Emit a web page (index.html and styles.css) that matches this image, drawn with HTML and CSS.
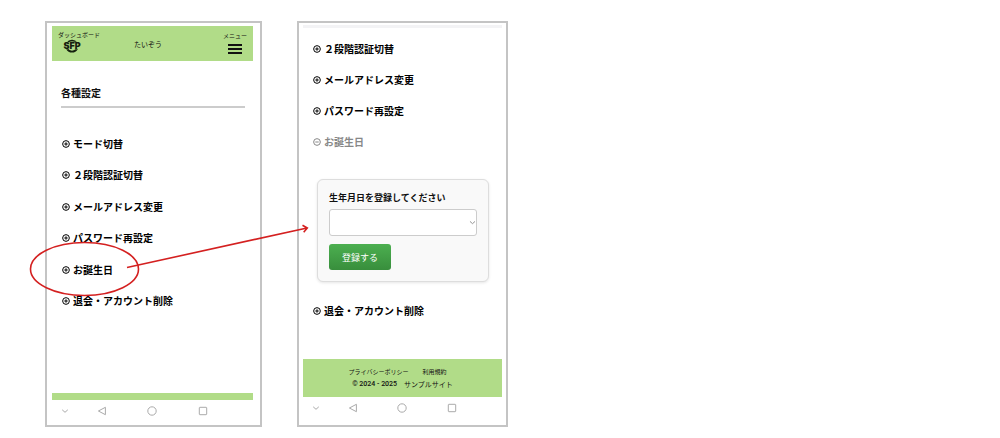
FILE: index.html
```html
<!DOCTYPE html>
<html lang="ja">
<head>
    <meta charset="UTF-8">
    <meta name="viewport" content="width=device-width,initial-scale=1">
    <title>各種設定</title>
    <link rel="stylesheet" href="styles.css">
</head>
<body>
    <!-- 共通アイコン -->
    <svg class="sprite" aria-hidden="true">
        <symbol id="plus" viewBox="0 0 16 16"><circle cx="8" cy="8" r="6.7"/><path d="M8 4.6v6.8M4.6 8h6.8"/></symbol>
        <symbol id="minus" viewBox="0 0 16 16"><circle cx="8" cy="8" r="6.7"/><path d="M4.6 8h6.8"/></symbol>
        <symbol id="down" viewBox="0 0 10 10"><path d="M2.2 3.8L5 6.3l2.8-2.5"/></symbol>
        <symbol id="back" viewBox="0 0 10 10"><path d="M8.4 1.3v7.4L1.4 5z"/></symbol>
        <symbol id="home" viewBox="0 0 10 10"><circle cx="5" cy="5" r="4.2"/></symbol>
        <symbol id="recent" viewBox="0 0 10 10"><rect x="1.3" y="1.3" width="7.4" height="7.4" rx=".6"/></symbol>
    </svg>

    <main class="stage">
        <section class="phone phone-top">
            <header class="header">
                <a class="dash" href="#">
                    <span>ダッシュボード</span>
                    <svg class="logo" viewBox="0 0 36 28" role="img" aria-label="SFP">
                        <path d="M27.5 8A11.5 11.5 0 0 0 8.5 8.5M8 19.5a11.5 11.5 0 0 0 20 0" fill="none" stroke="#15200f" stroke-width="3.6"/>
                        <text x="18" y="20" text-anchor="middle">SFP</text>
                    </svg>
                </a>
                <span class="user">たいぞう</span>
                <button class="burger" type="button">
                    <span>メニュー</span>
                    <i></i><i></i><i></i>
                </button>
            </header>
            <div class="content">
                <h1 class="title">各種設定</h1>
                <ul class="menu menu-full">
                    <li><a href="#"><svg><use href="#plus"/></svg>モード切替</a></li>
                    <li><a href="#"><svg><use href="#plus"/></svg>２段階認証切替</a></li>
                    <li><a href="#"><svg><use href="#plus"/></svg>メールアドレス変更</a></li>
                    <li><a href="#"><svg><use href="#plus"/></svg>パスワード再設定</a></li>
                    <li><a href="#"><svg><use href="#plus"/></svg>お誕生日</a></li>
                    <li><a href="#"><svg><use href="#plus"/></svg>退会・アカウント削除</a></li>
                </ul>
            </div>
            <div class="bar"></div>
            <nav class="keys">
                <svg><use href="#down"/></svg>
                <svg><use href="#back"/></svg>
                <svg><use href="#home"/></svg>
                <svg><use href="#recent"/></svg>
            </nav>
            <!-- 赤丸と矢印 -->
            <svg class="mark" viewBox="0 0 290 80">
                <ellipse cx="57.5" cy="46" rx="54" ry="26.5"/>
                <path d="M100 44.5L280 5M275.5 2.2l4.8 2.8-3.6 4.2"/>
            </svg>
        </section>

        <section class="phone phone-end">
            <div class="edge"></div>
            <div class="content">
                <ul class="menu">
                    <li><a href="#"><svg><use href="#plus"/></svg>２段階認証切替</a></li>
                    <li><a href="#"><svg><use href="#plus"/></svg>メールアドレス変更</a></li>
                    <li><a href="#"><svg><use href="#plus"/></svg>パスワード再設定</a></li>
                    <li><a class="open" href="#"><svg><use href="#minus"/></svg>お誕生日</a></li>
                </ul>
                <form class="card">
                    <label for="birth">生年月日を登録してください</label>
                    <div class="pick">
                        <select id="birth"><option></option></select>
                        <svg><use href="#down"/></svg>
                    </div>
                    <button class="submit" type="button">登録する</button>
                </form>
                <ul class="menu">
                    <li><a href="#"><svg><use href="#plus"/></svg>退会・アカウント削除</a></li>
                </ul>
            </div>
            <footer class="footer">
                <p class="links"><a href="#">プライバシーポリシー</a><a href="#">利用規約</a></p>
                <p class="copy"><span>© 2024 - 2025</span><a href="#">サンプルサイト</a></p>
            </footer>
            <nav class="keys">
                <svg><use href="#down"/></svg>
                <svg><use href="#back"/></svg>
                <svg><use href="#home"/></svg>
                <svg><use href="#recent"/></svg>
            </nav>
        </section>
    </main>
</body>
</html>
```
FILE: styles.css
```css
*{
    box-sizing:border-box;
}
body{
    margin:0;
    background:#fff;
    color:#111;
    font-family:"Noto Sans CJK JP",sans-serif;
    font-size:10px;
    line-height:18px;
}
ul,h1,p{
    margin:0;
    padding:0;
    list-style:none;
}
a{
    color:inherit;
    text-decoration:none;
}
svg{
    display:block;
    fill:none;
    stroke:currentColor;
}
.sprite{
    position:absolute;
    width:0;
    height:0;
}
.stage{
    display:grid;
    grid-template-columns:217fr 211fr 457fr;
    gap:35px;
    padding:21px 0 11px 45px;
}
.phone{
    position:relative;
    display:flex;
    flex-direction:column;
    min-height:406px;
    border:2px solid #c4c4c4;
}
.phone-top{
    padding:3px 7px 0 5px;
}
.phone-end{
    padding:2px 4px 0;
}
.content{
    flex:1;
    padding:0 8px 0 9px;
}

/* ヘッダー */
.header{
    display:flex;
    justify-content:space-between;
    height:35px;
    padding:5px 6px 0;
    background:#b1dc88;
    font-size:6px;
    line-height:8px;
}
.dash{
    width:76px;
}
.logo{
    width:18px;
    height:14px;
    margin-left:5px;
    overflow:visible;
}
.logo text{
    fill:#15200f;
    stroke:#b1dc88;
    stroke-width:1;
    paint-order:stroke;
    font:900 18px Inter,sans-serif;
}
.user{
    flex:1;
    padding-top:9px;
    font-size:7px;
}
.burger{
    display:flex;
    flex-direction:column;
    align-items:center;
    padding:0;
    border:0;
    background:none;
    color:inherit;
    font:inherit;
}
.burger i{
    width:14px;
    height:2px;
    margin-top:2px;
    background:#111;
}
.burger span{
    margin:1px 0 2px;
}

.title{
    margin-top:23px;
    padding-bottom:4px;
    border-bottom:2px solid #ccc;
    font-size:10px;
}

/* 設定メニュー */
.menu{
    display:flex;
    flex-direction:column;
    gap:13px;
    color:#000;
    font-weight:bold;
}
.menu a{
    display:flex;
    align-items:center;
    gap:3px;
}
.menu svg{
    width:8px;
    height:8px;
    margin-left:1px;
    stroke-width:2;
}
.menu .open{
    color:#888;
}
.menu-full{
    justify-content:space-between;
    height:175px;
    margin-top:27px;
}

.edge{
    height:3px;
    margin-bottom:12px;
    background:#f3f3f5;
}

/* 生年月日フォーム */
.card{
    margin:28px 5px 20px;
    padding:9px 11px 11px;
    border:1px solid #ddd;
    border-radius:6px;
    background:#f9f9f9;
    box-shadow:0 1px 3px rgba(0,0,0,.1);
}
.card label{
    display:block;
    margin-bottom:2px;
    font-size:9px;
    font-weight:bold;
}
.pick{
    position:relative;
}
.pick select{
    display:block;
    width:100%;
    height:27px;
    border:1px solid #ccc;
    border-radius:3px;
    background:#fff;
    appearance:none;
}
.pick svg{
    position:absolute;
    top:9px;
    right:0;
    width:9px;
    height:9px;
    color:#888;
}
.submit{
    display:block;
    height:26px;
    margin-top:8px;
    padding:0 13px;
    border:0;
    border-radius:3px;
    background:linear-gradient(#4caf50,#388e3c);
    color:#fff;
    font-family:inherit;
    font-size:9px;
}

/* フッター */
.bar{
    height:7px;
    background:#b1dc88;
}
.footer{
    padding:6px 0;
    background:#b1dc88;
    line-height:13px;
}
.footer p{
    display:flex;
    justify-content:center;
}
.links{
    gap:14px;
    padding-right:10px;
    font-size:6px;
}
.copy{
    gap:7px;
    font-size:7px;
}
.copy span{
    font-family:Roboto,sans-serif;
    font-weight:500;
}

/* 端末の操作キー */
.keys{
    display:grid;
    grid-template-columns:13% 24% 26% 24%;
    place-items:center;
    height:22px;
    margin-bottom:6px;
    color:#aaa;
}
.bar + .keys{
    margin-bottom:3px;
}
.keys svg{
    width:10px;
    height:10px;
}

.mark{
    position:absolute;
    z-index:1;
    top:200px;
    left:-20px;
    width:290px;
    height:80px;
    color:#d42020;
    stroke-width:1.6;
    pointer-events:none;
}
```
